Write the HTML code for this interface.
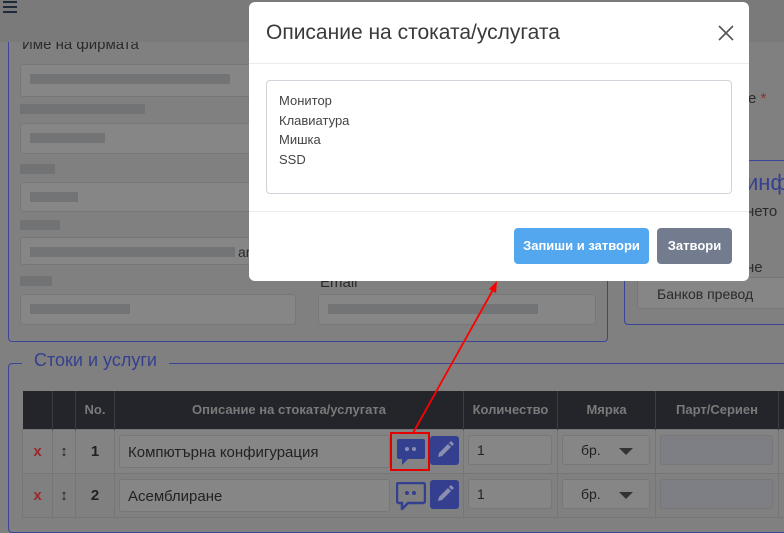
<!DOCTYPE html>
<html><head><meta charset="utf-8"><style>
*{box-sizing:border-box;margin:0;padding:0}
body{width:784px;height:521px;overflow:hidden;background:#808080;font-family:"Liberation Sans",sans-serif;position:relative}
.a{position:absolute}
.inp{position:absolute;background:#868686;border:1px solid #777;border-radius:3px}
.blur{position:absolute;height:10px;background:#6e6f72;opacity:.8}
.lbl{position:absolute;font-size:14px;color:#2a2a2a}
th{background:#23252a;color:#7a7a7a;font-size:13px;font-weight:bold;border-right:1px solid #3a3d42;height:38px}
td{border:1px solid #767676;height:44px;position:relative}
</style></head><body>
<div class="a" style="left:8px;top:30px;width:600px;height:312px;border:1px solid #3b4597;border-top:none;border-radius:0 0 4px 4px"></div>
<div class="lbl" style="left:22px;top:36px;font-size:15px">Име на фирмата</div>
<div class="a" style="left:0;top:0;width:784px;height:42px;background:#7a7a7a"></div>
<div class="a" style="left:3px;top:1px;width:14px;height:2px;background:#1e2a3a;box-shadow:0 5px 0 #1e2a3a,0 10px 0 #1e2a3a"></div>
<div class="inp" style="left:20px;top:64px;width:280px;height:33px"></div><div class="blur" style="left:30px;top:74px;width:200px"></div>
<div class="blur" style="left:20px;top:104px;width:125px"></div>
<div class="inp" style="left:20px;top:123px;width:280px;height:31px"></div><div class="blur" style="left:30px;top:133px;width:75px"></div>
<div class="blur" style="left:20px;top:164px;width:35px"></div>
<div class="inp" style="left:20px;top:182px;width:280px;height:30px"></div><div class="blur" style="left:30px;top:192px;width:48px"></div>
<div class="blur" style="left:20px;top:220px;width:40px"></div>
<div class="inp" style="left:20px;top:237px;width:280px;height:28px"></div><div class="blur" style="left:30px;top:247px;width:205px"></div>
<div class="lbl" style="left:238px;top:244px">ar</div>
<div class="blur" style="left:20px;top:276px;width:32px"></div>
<div class="inp" style="left:20px;top:294px;width:276px;height:31px"></div><div class="blur" style="left:30px;top:304px;width:100px"></div>
<div class="lbl" style="left:320px;top:274px;font-size:15px">Email</div>
<div class="inp" style="left:318px;top:294px;width:278px;height:31px"></div><div class="blur" style="left:328px;top:304px;width:210px"></div>
<div class="lbl" style="left:748px;top:90px;font-size:15px">е <span style="color:#8a3030">*</span></div>
<div class="a" style="left:624px;top:160px;width:170px;height:165px;border:1px solid #3b4597;border-radius:4px"></div>
<div class="lbl" style="left:746px;top:170px;font-size:22px;color:#34408f">инфо</div>
<div class="lbl" style="left:746px;top:203px;font-size:15px">нето</div>
<div class="lbl" style="left:746px;top:259px;font-size:15px">не</div>
<div class="inp" style="left:637px;top:277px;width:160px;height:32px"></div>
<div class="lbl" style="left:657px;top:286px">Банков превод</div>
<div class="a" style="left:8px;top:363px;width:790px;height:170px;border:1px solid #3b4597;border-radius:4px"></div>
<div class="a" style="left:22px;top:350px;background:#808080;padding:0 12px;font-size:18px;color:#34408f">Стоки и услуги</div>
<table class="a" style="left:22px;top:391px;border-collapse:collapse;width:780px">
<tr><th style="width:30px"></th><th style="width:23px"></th><th style="width:39px">No.</th><th style="width:349px">Описание на стоката/услугата</th><th style="width:94px">Количество</th><th style="width:98px">Мярка</th><th style="width:123px">Парт/Сериен</th><th></th></tr>
<tr style="background:#838383"><td style="color:#9a2a2a;text-align:center;font-weight:bold;font-size:15px">x</td><td style="text-align:center;font-size:15px;color:#222">↕</td><td style="text-align:center;font-weight:bold;font-size:15px;color:#222">1</td><td><div class="inp" style="left:4px;top:5px;width:271px;height:33px;font-size:15px;color:#222;padding:8px 8px">Компютърна конфигурация</div></td><td><div class="inp" style="left:4px;top:5px;width:84px;height:30px;font-size:14px;padding:6px 8px;color:#222">1</div></td><td><div class="inp" style="left:4px;top:5px;width:88px;height:30px;font-size:14px;padding:6px 18px;color:#222">бр.<span style="position:absolute;right:16px;top:12px;border:7px solid transparent;border-top:7px solid #333;border-bottom:0"></span></div></td><td><div class="inp" style="left:4px;top:5px;width:113px;height:30px;background:#7d7f84"></div></td><td></td></tr>
<tr><td style="color:#9a2a2a;text-align:center;font-weight:bold;font-size:15px">x</td><td style="text-align:center;font-size:15px;color:#222">↕</td><td style="text-align:center;font-weight:bold;font-size:15px;color:#222">2</td><td><div class="inp" style="left:4px;top:5px;width:271px;height:33px;font-size:15px;color:#222;padding:8px 8px">Асемблиране</div></td><td><div class="inp" style="left:4px;top:5px;width:84px;height:30px;font-size:14px;padding:6px 8px;color:#222">1</div></td><td><div class="inp" style="left:4px;top:5px;width:88px;height:30px;font-size:14px;padding:6px 18px;color:#222">бр.<span style="position:absolute;right:16px;top:12px;border:7px solid transparent;border-top:7px solid #333;border-bottom:0"></span></div></td><td><div class="inp" style="left:4px;top:5px;width:113px;height:30px;background:#7d7f84"></div></td><td></td></tr>
</table>
<svg class="a" style="left:396px;top:438px" width="30" height="28" viewBox="0 0 30 28"><path d="M2 1h25a2 2 0 0 1 2 2v16a2 2 0 0 1-2 2H12l-6 6v-6H3a2 2 0 0 1-2-2V3a2 2 0 0 1 1-2z" fill="#33408f"/><circle cx="11" cy="11" r="2" fill="#8a8fb0"/><circle cx="18" cy="11" r="2" fill="#8a8fb0"/></svg>
<svg class="a" style="left:396px;top:482px" width="30" height="28" viewBox="0 0 30 28"><path d="M2 1h25a2 2 0 0 1 2 2v16a2 2 0 0 1-2 2H12l-6 6v-6H3a2 2 0 0 1-2-2V3a2 2 0 0 1 1-2z" fill="none" stroke="#33408f" stroke-width="2.5"/><circle cx="11" cy="11" r="2" fill="#33408f"/><circle cx="18" cy="11" r="2" fill="#33408f"/></svg>
<div class="a" style="left:430px;top:436px;width:29px;height:29px;background:#34408f;border-radius:3px"></div>
<div class="a" style="left:430px;top:480px;width:29px;height:29px;background:#34408f;border-radius:3px"></div>
<svg class="a" style="left:430px;top:436px" width="29" height="29"><path d="M8 21l1-4 9-9 3 3-9 9z M19 7l2-2 3 3-2 2z" fill="#8a8fb0"/></svg>
<svg class="a" style="left:430px;top:480px" width="29" height="29"><path d="M8 21l1-4 9-9 3 3-9 9z M19 7l2-2 3 3-2 2z" fill="#8a8fb0"/></svg>
<div class="a" style="left:390px;top:432px;width:40px;height:39px;border:2px solid #e00000"></div>
<svg class="a" style="left:0;top:0" width="784" height="521"><line x1="413" y1="433" x2="494" y2="288" stroke="#f00" stroke-width="1.8"/><path d="M497 281l-1 12-7-4z" fill="#f00"/></svg>
<div class="a" style="left:249px;top:2px;width:500px;height:279px;background:#fff;border-radius:6px">
<div class="a" style="left:17px;top:19px;font-size:21px;color:#3a3a3a">Описание на стоката/услугата</div>
<svg class="a" style="left:469px;top:23px" width="16" height="16"><path d="M1 1L15 15M15 1L1 15" stroke="#555" stroke-width="1.6"/></svg>
<div class="a" style="left:0;top:61px;width:500px;height:1px;background:#e9ecef"></div>
<div class="a" style="left:17px;top:78px;width:466px;height:114px;border:1px solid #ced4da;border-radius:4px;padding:10px 12px;font-size:13px;line-height:19.5px;color:#444">Монитор<br>Клавиатура<br>Мишка<br>SSD</div>
<div class="a" style="left:0;top:209px;width:500px;height:1px;background:#e9ecef"></div>
<div class="a" style="left:265px;top:226px;width:135px;height:36px;background:#52a7ee;border-radius:4px;color:#fff;font-size:13px;font-weight:bold;text-align:center;line-height:36px">Запиши и затвори</div>
<div class="a" style="left:408px;top:226px;width:75px;height:36px;background:#737b8f;border-radius:4px;color:#fff;font-size:13px;font-weight:bold;text-align:center;line-height:36px">Затвори</div>
</div>
</body></html>
